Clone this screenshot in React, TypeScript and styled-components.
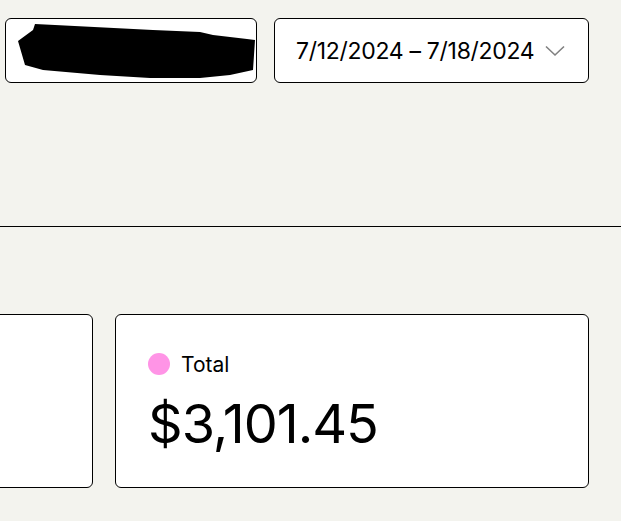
import React from "react";
import styled, { createGlobalStyle } from "styled-components";

const Global = createGlobalStyle`
  html, body { margin: 0; padding: 0; background: #f3f3ee; }
  body { font-family: Inter, "Noto Sans", sans-serif; color: #000; }
`;

const Page = styled.div`
  width: 621px;
  height: 521px;
  overflow: hidden;
  background: #f3f3ee;
`;

const Header = styled.div`
  display: flex;
  justify-content: flex-end;
  gap: 17px;
  padding: 18px 32px 0 0;
  height: 227px;
  box-sizing: border-box;
  border-bottom: 1px solid #000;
`;

const Control = styled.div<{ $w: number }>`
  width: ${(p) => p.$w}px;
  height: 65px;
  box-sizing: border-box;
  border: 1px solid #000;
  border-radius: 6px;
  background: #fff;
  display: flex;
  align-items: center;
  flex-shrink: 0;
`;

const Redacted = styled.svg`
  display: block;
`;

const DateButton = styled(Control)`
  justify-content: space-between;
  padding: 0 23px 0 21px;
  font-size: 23px;
  letter-spacing: -0.3px;
`;

const Chevron = styled.svg`
  width: 20px;
  height: 12px;
  color: #808080;
`;

const Cards = styled.div`
  display: flex;
  justify-content: flex-end;
  gap: 22px;
  padding: 87px 32px 0 0;
`;

const Card = styled.div`
  width: 474px;
  height: 174px;
  flex-shrink: 0;
  box-sizing: border-box;
  border: 1px solid #000;
  border-radius: 6px;
  background: #fff;
  padding: 37px 32px 0;
`;

const Label = styled.div`
  display: flex;
  align-items: center;
  gap: 11px;
  font-size: 21px;
  height: 24px;
`;

const Dot = styled.span<{ $c: string }>`
  width: 22px;
  height: 22px;
  border-radius: 50%;
  background: ${(p) => p.$c};
`;

const Amount = styled.div`
  margin-top: 20px;
  font-size: 54px;
  line-height: 56px;
  letter-spacing: -1px;
`;

export default function App() {
  return (
    <Page>
      <Global />
      <Header>
        <Control $w={252}>
          <Redacted width="250" height="63" viewBox="0 0 250 63">
            <polygon
              fill="#000"
              points="29,5 49,6 147,11 194,13 207,16 241,20 249,21 247,51 224,56 194,59 144,59 94,56 37,51 19,46 12,22 27,11"
            />
          </Redacted>
        </Control>
        <DateButton $w={315}>
          <span>7/12/2024 – 7/18/2024</span>
          <Chevron viewBox="0 0 20 12" fill="none">
            <path d="M1 1.5 L10 10 L19 1.5" stroke="currentColor" strokeWidth="1.6" />
          </Chevron>
        </DateButton>
      </Header>
      <Cards>
        <Card />
        <Card>
          <Label>
            <Dot $c="#ff94e6" />
            Total
          </Label>
          <Amount>$3,101.45</Amount>
        </Card>
      </Cards>
    </Page>
  );
}
